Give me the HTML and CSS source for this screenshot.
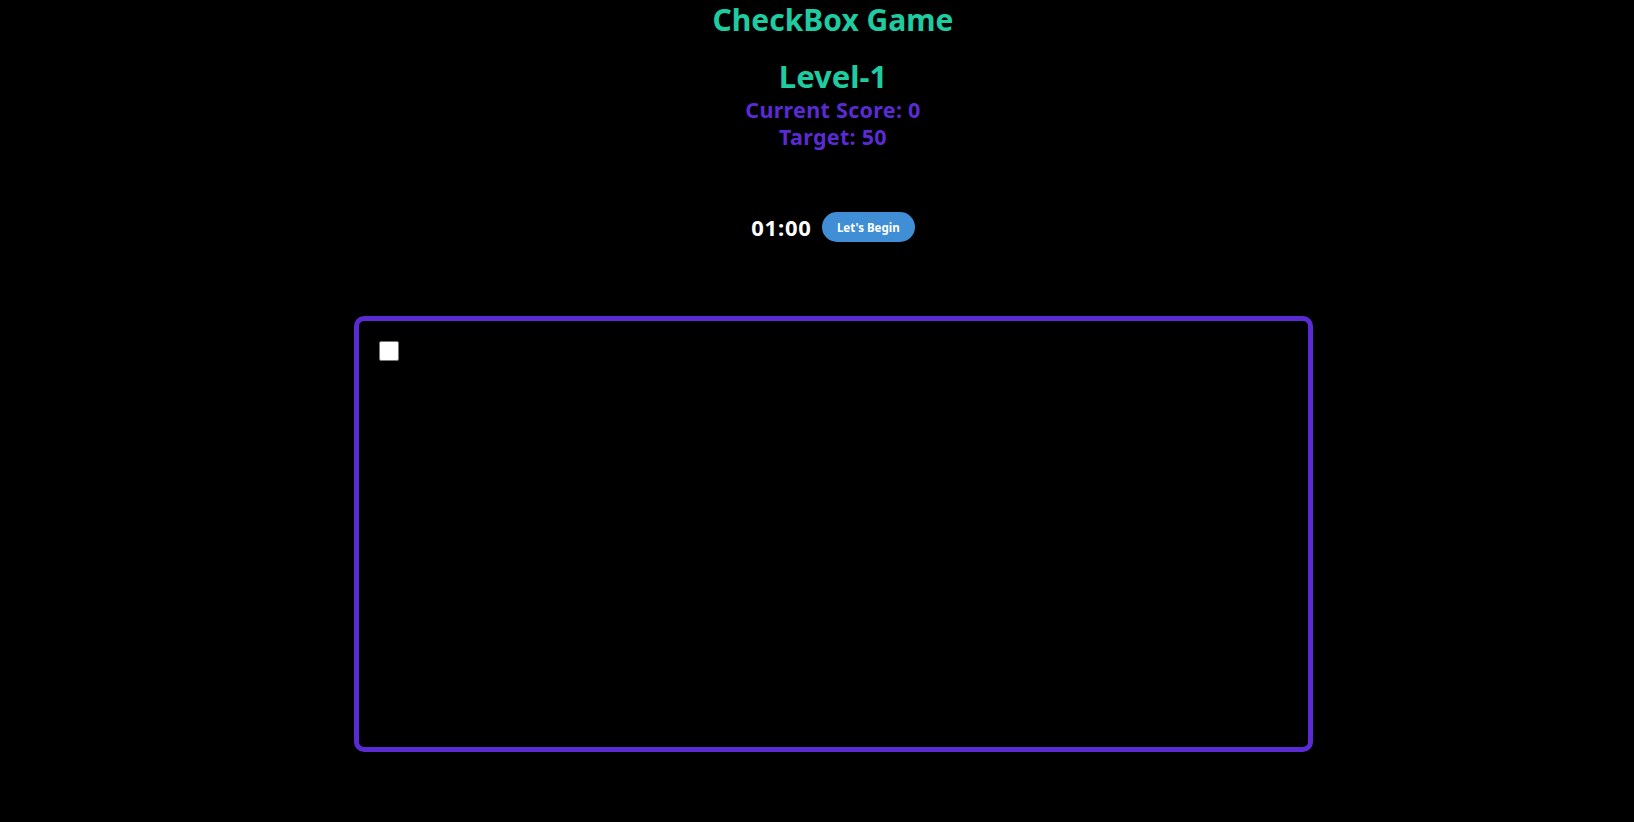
FILE: index.html
```html
<!DOCTYPE html>
<html lang="en">
<head>
<meta charset="utf-8">
<title>CheckBox Game</title>
<link rel="stylesheet" href="styles.css">
</head>
<body>
<main class="page">
  <h1 class="title">CheckBox Game</h1>
  <section class="info">
    <h2 class="level">Level-1</h2>
    <p class="stat">Current Score: 0</p>
    <p class="stat">Target: 50</p>
  </section>
  <div class="controls">
    <span class="timer">01:00</span>
    <button class="begin">Let's Begin</button>
  </div>
  <div class="board">
    <input type="checkbox" class="box">
  </div>
</main>
</body>
</html>
```
FILE: styles.css
```css
html, body {
  background: #000;
}
body {
  margin: 8px;
  font-family: "Noto Sans", "Open Sans", sans-serif;
  overflow: hidden;
}
.page {
  padding-left: 32px;
  display: flex;
  flex-direction: column;
  align-items: center;
}
.title {
  margin: -8px 0 0;
  font-size: 30px;
  line-height: 40px;
  font-weight: 700;
  color: #1fcba1;
}
.info {
  margin-top: 17px;
  display: flex;
  flex-direction: column;
  align-items: center;
}
.level {
  margin: 0;
  font-size: 31px;
  line-height: 39px;
  font-weight: 700;
  color: #1fcba1;
}
.stat {
  margin: 0;
  font-size: 21.5px;
  line-height: 27px;
  letter-spacing: 0.3px;
  font-weight: 700;
  color: #5a2bd2;
}
.controls {
  margin-top: 62px;
  display: flex;
  align-items: center;
  gap: 10px;
}
.timer {
  font-size: 22px;
  letter-spacing: 0.8px;
  font-weight: 700;
  color: #fff;
}
.begin {
  width: 93px;
  height: 30px;
  border: none;
  border-radius: 15px;
  background: #3f8ed6;
  color: #fff;
  font-family: "Noto Sans", sans-serif;
  font-size: 11.5px;
  font-weight: 700;
  padding: 0;
  cursor: pointer;
}
.board {
  margin-top: 74px;
  width: 959px;
  height: 436px;
  box-sizing: border-box;
  border: 5px solid #5a2ad3;
  border-radius: 10px;
  padding: 20px;
}
.box {
  appearance: none;
  -webkit-appearance: none;
  display: block;
  margin: 0;
  width: 20px;
  height: 20px;
  background: #fff;
  border: 1px solid #777;
  border-radius: 2px;
  box-sizing: border-box;
}
```
